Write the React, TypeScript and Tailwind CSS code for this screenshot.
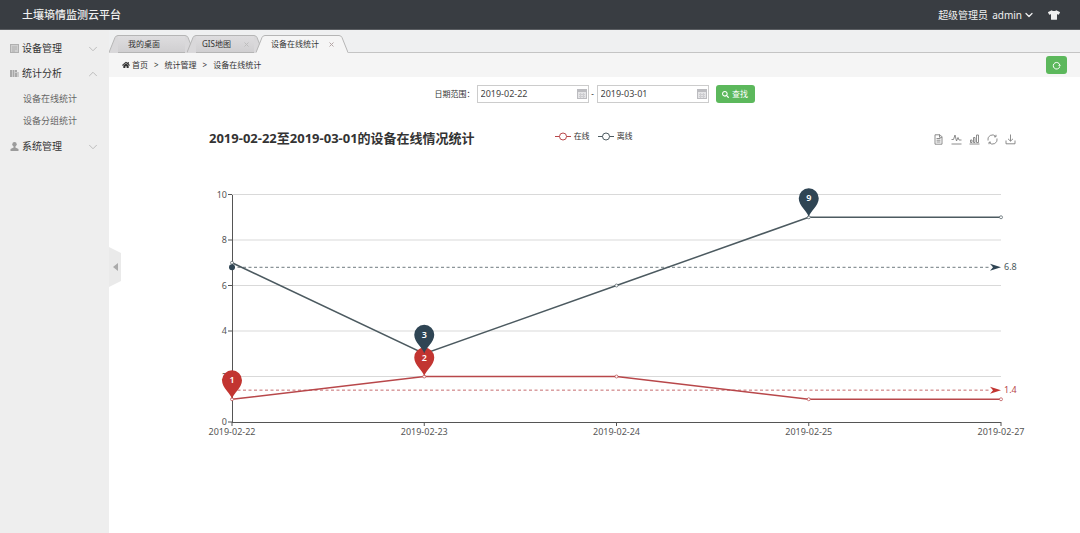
import { useEffect, useRef, useState } from "react";
import type { ReactNode } from "react";
import { FaHome, FaSearch, FaTshirt } from "react-icons/fa";
import { ChevronDown, ChevronUp } from "lucide-react";

type TabProps = {
  label: string;
  width: string;
  active?: boolean;
  closable?: boolean;
};

type Series = {
  name: string;
  color: string;
  values: number[];
  average: number;
  pins: number[];
};

const dates = ["2019-02-22", "2019-02-23", "2019-02-24", "2019-02-25", "2019-02-27"];

const series: Series[] = [
  { name: "在线", color: "#b8474a", values: [1, 2, 2, 1, 1], average: 1.4, pins: [0, 1] },
  { name: "离线", color: "#4c5a60", values: [7, 3, 6, 9, 9], average: 6.8, pins: [1, 3] },
];

const pinColors = ["#c23531", "#2f4554"];

const Header = () => (
  <header className="flex h-[30px] items-center justify-between border-b border-[#5b5e62] bg-[#393d42] pr-5 pl-[22px] text-[#f0f0f0]">
    <h1 className="text-[11px] leading-4 font-medium">土壤墒情监测云平台</h1>
    <div className="flex items-center text-[10px] leading-4">
      <span>超级管理员</span>
      <button type="button" className="ml-1 flex items-center gap-px">
        admin
        <ChevronDown size={12} strokeWidth={2.5} />
      </button>
      <button type="button" aria-label="换肤" className="ml-[13px]">
        <FaTshirt size={12} />
      </button>
    </div>
  </header>
);

const DeviceIcon = () => (
  <svg width="9" height="9" viewBox="0 0 9 9" fill="none" stroke="#b0b0b0">
    <rect x=".5" y=".5" width="8" height="8" fill="#cfcfcf" />
    <path d="M2 3h5M2 5h5M2 7h3" />
  </svg>
);

const StatsIcon = () => (
  <svg width="9" height="9" viewBox="0 0 9 9" fill="#a8a8a8">
    <path d="M0 1h2v7H0zM2.5 1h2v7h-2zM5 1h2v2H5zM5 3.5h2V8H5zM7.5 3h1v5h-1z" />
  </svg>
);

const UserIcon = () => (
  <svg width="9" height="9" viewBox="0 0 9 9" fill="#9b9b9b">
    <circle cx="4.5" cy="2.3" r="2.2" />
    <path d="M3.6 4h1.8v1.6L8.5 7v2h-8V7l3.1-1.4z" />
  </svg>
);

type MenuItemProps = {
  icon: ReactNode;
  label: string;
  open?: boolean;
  children?: ReactNode;
};

const MenuItem = ({ icon, label, open, children }: MenuItemProps) => (
  <li>
    <button
      type="button"
      aria-expanded={!!open}
      className="flex h-[25px] w-full items-center pr-[9px] pl-[10px] text-[10px] text-[#333]"
    >
      {icon}
      <span className="ml-[3px]">{label}</span>
      <span className="ml-auto text-[#b5b5b5]">
        {open ? <ChevronUp size={14} strokeWidth={1.5} /> : <ChevronDown size={14} strokeWidth={1.5} />}
      </span>
    </button>
    {children}
  </li>
);

const Sidebar = () => (
  <nav className="w-[109px] shrink-0 bg-[#eee] pt-[6px]">
    <ul>
      <MenuItem icon={<DeviceIcon />} label="设备管理" />
      <MenuItem icon={<StatsIcon />} label="统计分析" open>
        <ul className="py-[2px] text-[9px] text-[#666]">
          <li>
            <a href="#" className="flex h-[22px] items-center pl-[23px]">设备在线统计</a>
          </li>
          <li>
            <a href="#" className="flex h-[22px] items-center pl-[23px]">设备分组统计</a>
          </li>
        </ul>
      </MenuItem>
      <MenuItem icon={<UserIcon />} label="系统管理" />
    </ul>
  </nav>
);

const Tab = ({ label, width, active, closable }: TabProps) => {
  const fill = active ? "#f5f5f5" : "#d9d8da";
  return (
    <li className={`relative -mr-[7px] flex h-[18px] items-center ${width} ${active ? "z-10" : ""}`}>
      <span className="absolute inset-0 flex" aria-hidden="true">
        <svg width="9" height="18" viewBox="0 0 9 18" className="shrink-0">
          <path d="M0 18 6 2.5Q7 .5 9 .5V18z" fill={fill} />
          <path d="M0 17.5 6 2.5Q7 .5 9 .5" fill="none" stroke="#b5b5b5" />
        </svg>
        <span
          className={`grow border-t border-[#b5b5b5] ${active ? "bg-[#f5f5f5]" : "border-b bg-linear-to-b from-[#dedddf] to-[#d0cfd1]"}`}
        />
        <svg width="9" height="18" viewBox="0 0 9 18" className="shrink-0">
          <path d="M9 18 3 2.5Q2 .5 0 .5V18z" fill={fill} />
          <path d="M9 17.5 3 2.5Q2 .5 0 .5" fill="none" stroke="#b5b5b5" />
        </svg>
      </span>
      <button type="button" className={`relative whitespace-nowrap ${closable ? "pl-[15px]" : "pl-[19px]"}`}>
        {label}
      </button>
      {closable && (
        <button type="button" aria-label={`关闭${label}`} className="relative ml-auto pr-[14px]">
          <svg width="5" height="5" viewBox="0 0 5 5" stroke={active ? "#b3a5a5" : "#bdbdbd"}>
            <path d="M.5.5l4 4M4.5.5l-4 4" />
          </svg>
        </button>
      )}
    </li>
  );
};

const Breadcrumb = () => (
  <div className="flex h-6 items-center justify-between bg-[#f5f5f5] pr-[13px] pl-[13px]">
    <nav className="flex items-center gap-[6px] text-[8px] text-[#333]">
      <a href="#" className="flex items-center gap-[2px]">
        <FaHome size={8} />
        首页
      </a>
      <span>&gt;</span>
      <a href="#">统计管理</a>
      <span>&gt;</span>
      <span>设备在线统计</span>
    </nav>
    <button
      type="button"
      aria-label="刷新"
      className="flex h-[18px] w-[21px] items-center justify-center rounded-[3px] bg-[#5cb85c]"
    >
      <svg width="9" height="9" viewBox="0 0 9 9" fill="none" stroke="#fff">
        <path d="M7.6 6.1A3.3 3.3 0 1 1 7.8 4" />
        <path d="M6 4.2h3L7.7 5.8z" fill="#fff" stroke="none" />
      </svg>
    </button>
  </div>
);

const DateField = ({ label, value }: { label: string; value: string }) => (
  <span className="flex h-[18px] w-28 items-center border border-[#ccc] bg-white pr-px pl-[3px]">
    <input
      type="text"
      aria-label={label}
      defaultValue={value}
      className="w-full min-w-0 text-[9px] leading-4 text-[#444] outline-none"
    />
    <svg width="10" height="10" viewBox="0 0 10 10" className="shrink-0" fill="none">
      <rect x=".5" y=".5" width="9" height="9" fill="#e4e4e6" stroke="#bcbcc0" />
      <path d="M1 2h8" stroke="#bcbcc0" strokeWidth="2" />
      <path d="M2 5.5h6M2 7.5h6M3.5 4v5M6.5 4v5" stroke="#cdcdd0" />
    </svg>
  </span>
);

const SearchForm = () => (
  <form
    className="flex items-center justify-center pt-2 text-[8px] text-[#333]"
    onSubmit={(event) => event.preventDefault()}
  >
    <span className="mr-[2px]">日期范围：</span>
    <DateField label="开始日期" value="2019-02-22" />
    <span className="w-2 text-center">-</span>
    <DateField label="结束日期" value="2019-03-01" />
    <button
      type="submit"
      className="ml-[7px] flex h-[18px] w-[39px] items-center justify-center gap-[3px] rounded-[3px] bg-[#5cb85c] text-white"
    >
      <FaSearch size={7} />
      查找
    </button>
  </form>
);

const toolIcons = [
  { label: "数据视图", path: "M2 .8h5l2 2v7.4H2zM6.5.8v2.5H9M3.5 4.5h4M3.5 6.2h4M3.5 8h4" },
  { label: "切换为折线图", path: "M.5 10h10M.5 5.5H2.5L4 1 5.5 7 7 3.5 8 6h2.5" },
  { label: "切换为柱状图", path: "M.5 10h10M1.5 6h1.5v2.5H1.5zM4.5 3.5H6v5H4.5zM7.5 1H9.5v7.5h-2z" },
  { label: "还原", path: "M1 6.5A4.5 4.5 0 0 1 8.7 2.4M10 4.5A4.5 4.5 0 0 1 2.3 8.6M9 .8v2H7M2 10.2v-2h2" },
  { label: "保存为图片", path: "M1 6.5v3.3h9V6.5M5.5.5V7M3 4.8 5.5 7.2 8 4.8" },
];

const ChartHeader = () => (
  <div className="flex items-start">
    <h2 className="text-[13px] leading-[18px] font-bold text-[#333]">
      2019-02-22至2019-03-01的设备在线情况统计
    </h2>
    <ul className="ml-20 flex gap-2 text-[8px] leading-[14px] text-[#333]">
      {series.map((item) => (
        <li key={item.name} className="flex items-center gap-[3px]">
          <svg width="16" height="9" viewBox="0 0 16 9" fill="#fff" stroke={item.color}>
            <path d="M0 4.5h16" />
            <circle cx="8" cy="4.5" r="3.5" />
          </svg>
          {item.name}
        </li>
      ))}
    </ul>
    <div className="mt-[5px] ml-auto flex gap-[7px]">
      {toolIcons.map((icon) => (
        <button key={icon.label} type="button" aria-label={icon.label}>
          <svg width="11" height="11" viewBox="0 0 11 11" fill="none" stroke="#808080" strokeWidth="0.9">
            <path d={icon.path} />
          </svg>
        </button>
      ))}
    </div>
  </div>
);

const LineChart = () => {
  const box = useRef<HTMLDivElement>(null);
  const [width, setWidth] = useState(820);

  useEffect(() => {
    if (!box.current) return;
    const update = () => box.current && setWidth(box.current.clientWidth);
    update();
    const observer = new ResizeObserver(update);
    observer.observe(box.current);
    return () => observer.disconnect();
  }, []);

  const left = 23;
  const right = width - 27;
  const bottom = 242;
  const x = (index: number) => left + (index * (right - left)) / (dates.length - 1);
  const y = (value: number) => bottom - value * 22.75;

  return (
    <div ref={box} className="-mr-3">
      <svg width={width} height="262" className="block overflow-visible text-[9px]" fill="#555">
        {[0, 2, 4, 6, 8, 10].map((tick) => (
          <g key={tick}>
            {tick > 0 && (
              <line x1={left} x2={right} y1={y(tick)} y2={y(tick)} stroke="#d9d9d9" />
            )}
            <line x1={left - 4} x2={left} y1={y(tick)} y2={y(tick)} stroke="#555" />
            <text x={left - 5} y={y(tick) + 3} textAnchor="end">
              {tick}
            </text>
          </g>
        ))}
        <path
          d={`M${left} ${y(10)}V${bottom}H${right}`}
          fill="none"
          stroke="#555"
          shapeRendering="crispEdges"
        />
        {dates.map((date, index) => (
          <g key={date}>
            <line x1={x(index)} x2={x(index)} y1={bottom} y2={bottom + 4} stroke="#555" />
            <text x={x(index)} y={bottom + 13} textAnchor="middle">
              {date}
            </text>
          </g>
        ))}
        {series.map((item) => (
          <g key={item.name}>
            <polyline
              points={item.values.map((value, index) => `${x(index)},${y(value)}`).join(" ")}
              fill="none"
              stroke={item.color}
              strokeWidth="1.5"
            />
            {item.values.map((value, index) => (
              <circle key={index} cx={x(index)} cy={y(value)} r="1.5" fill="#fff" stroke={item.color} strokeWidth="0.7" />
            ))}
          </g>
        ))}
        {series.map((item, seriesIndex) => (
          <g key={item.name} fill={pinColors[seriesIndex]}>
            <line
              x1={left}
              x2={right - 10}
              y1={y(item.average)}
              y2={y(item.average)}
              stroke={item.color}
              strokeOpacity="0.8"
              strokeDasharray="3 2.5"
            />
            <circle cx={left} cy={y(item.average)} r="3" />
            <path d={`M${right} ${y(item.average)}l-11-3.5 3 3.5-3 3.5z`} />
            <text x={right + 3} y={y(item.average) + 3} fill={item.color}>
              {item.average}
            </text>
            {item.pins.map((index) => (
              <g key={index} transform={`translate(${x(index)} ${y(item.values[index])})`}>
                <path d="M0 0C-1-6-10-11-10-19a10 10 0 0 1 20 0C10-11 1-6 0 0Z" />
                <text y="-16" textAnchor="middle" fill="#fff" className="font-semibold">
                  {item.values[index]}
                </text>
              </g>
            ))}
          </g>
        ))}
      </svg>
    </div>
  );
};

const App = () => {
  return (
    <div
      lang="zh-CN"
      className="flex min-h-screen flex-col bg-white font-['Noto_Sans','Noto_Sans_CJK_SC',sans-serif]"
    >
      <Header />
      <div className="relative flex grow">
        <Sidebar />
        <main className="min-w-0 grow">
          <div className="border-b border-[#c4c4c4] bg-[#eff0f1] pt-[5px]">
            <ul className="-mb-px flex text-[8px] text-[#333]">
              <Tab label="我的桌面" width="w-[85px]" />
              <Tab label="GIS地图" width="w-[76px]" closable />
              <Tab label="设备在线统计" width="w-[92px]" active closable />
            </ul>
          </div>
          <Breadcrumb />
          <SearchForm />
          <section className="mt-[26px] pr-16 pl-[100px]">
            <ChartHeader />
            <div className="mt-[33px]">
              <LineChart />
            </div>
          </section>
        </main>
        <button
          type="button"
          aria-label="收起菜单"
          className="absolute top-[217px] left-[109px] flex h-10 w-3 items-center justify-center bg-[#eaeaea] [clip-path:polygon(0_0,100%_15%,100%_85%,0_100%)]"
        >
          <svg width="5" height="8" viewBox="0 0 5 8" fill="#aaa">
            <path d="M0 4 5 0v8z" />
          </svg>
        </button>
      </div>
    </div>
  );
};

export default App;
